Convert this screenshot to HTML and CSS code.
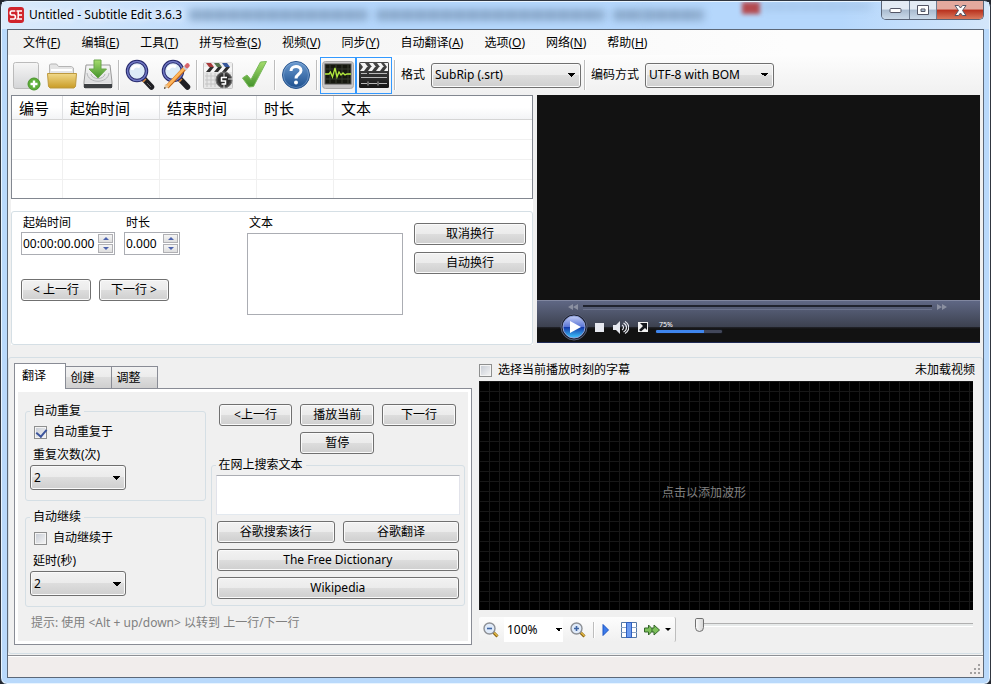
FILE: index.html
```
<!DOCTYPE html>
<html lang="zh-CN">
<head>
  <meta charset="UTF-8">
  <meta name="viewport" content="width=device-width, initial-scale=1.0">
  <title>Untitled - Subtitle Edit 3.6.3</title>
  <link rel="stylesheet" href="styles.css">
</head>
<body>
<div class="window">

  <!-- Title bar -->
  <header class="titlebar">
    <div class="glass" aria-hidden="true">
      <i class="smudge s1"></i><i class="smudge s2"></i><i class="smudge s3"></i><i class="smudge s4"></i><i class="smudge red"></i><i class="smudge s5"></i>
    </div>
    <svg class="app-icon" width="16" height="16" viewBox="0 0 16 16">
      <rect width="16" height="16" rx="3" fill="#d0242c"/>
      <path d="M7.300 4H3.200L2.300 5v2l1 1h3l1 1v2l-1 1H2" fill="none" stroke="#fff" stroke-width="1.700"/>
      <path d="M8.500 4H14M9.500 8H14M8.500 12H14M10.200 4v8" fill="none" stroke="#fff" stroke-width="1.500"/>
    </svg>
    <h1>Untitled - Subtitle Edit 3.6.3</h1>
    <div class="caption-buttons">
      <button class="min" aria-label="最小化"><svg width="13" height="7"><rect x="1" y="1.500" width="11" height="4" rx="1" fill="#fff" stroke="#535666"/></svg></button>
      <button class="max" aria-label="最大化"><svg width="12" height="10"><path d="M.5.500h11v9H.5zM4 4v2.500h4V4z" fill="#fff" fill-rule="evenodd" stroke="#535666"/></svg></button>
      <button class="close" aria-label="关闭"><svg width="13" height="11" viewBox="0 0 13 11"><path d="M1 .5h3.500l2 2.500 2-2.500H12L8.500 5.500l3.500 5H8.500l-2-2.500-2 2.500H1l3.500-5z" fill="#fff" stroke="#535666"/></svg></button>
    </div>
  </header>

  <div class="client">
    <nav class="menu">
      <a href="#">文件(<u>F</u>)</a>
      <a href="#">编辑(<u>E</u>)</a>
      <a href="#">工具(<u>T</u>)</a>
      <a href="#">拼写检查(<u>S</u>)</a>
      <a href="#">视频(<u>V</u>)</a>
      <a href="#">同步(<u>Y</u>)</a>
      <a href="#">自动翻译(<u>A</u>)</a>
      <a href="#">选项(<u>O</u>)</a>
      <a href="#">网络(<u>N</u>)</a>
      <a href="#">帮助(<u>H</u>)</a>
    </nav>

    <!-- Gradients shared by the toolbar icons -->
    <svg class="defs" width="0" height="0" aria-hidden="true">
      <defs>
        <linearGradient id="paper" x1="0" y1="0" x2="0" y2="1"><stop offset="0" stop-color="#f6f6f6"/><stop offset="1" stop-color="#d4d5d7"/></linearGradient>
        <linearGradient id="green" x1="0" y1="0" x2="0" y2="1"><stop offset="0" stop-color="#a5dc6c"/><stop offset="1" stop-color="#43922c"/></linearGradient>
        <linearGradient id="gold" x1="0" y1="0" x2="0" y2="1"><stop offset="0" stop-color="#f1d98a"/><stop offset="1" stop-color="#c99c26"/></linearGradient>
        <linearGradient id="drive" x1="0" y1="0" x2="0" y2="1"><stop offset="0" stop-color="#f4f4f4"/><stop offset="1" stop-color="#a9acb0"/></linearGradient>
        <linearGradient id="blue" x1="0" y1="0" x2="0" y2="1"><stop offset="0" stop-color="#6c9bd0"/><stop offset="1" stop-color="#1c4f8e"/></linearGradient>
        <linearGradient id="black" x1="0" y1="0" x2="0" y2="1"><stop offset="0" stop-color="#4a4a4a"/><stop offset="1" stop-color="#161616"/></linearGradient>
        <linearGradient id="orb" x1="0" y1="0" x2="0" y2="1"><stop offset="0" stop-color="#c3cdf5"/><stop offset=".48" stop-color="#5b76d6"/><stop offset=".5" stop-color="#1233a5"/><stop offset="1" stop-color="#3fc8ff"/></linearGradient>
      </defs>
    </svg>

    <div class="toolbar">
      <button class="tool" aria-label="新建">
        <svg width="32" height="32" viewBox="0 0 32 32">
          <rect x="3.500" y="3.500" width="25" height="26" rx="2" fill="url(#paper)" stroke="#bbb"/>
          <circle cx="24" cy="25" r="6" fill="#5cae37" stroke="#4a932c"/>
          <path d="M24 21.500v7M20.500 25h7" stroke="#fff" stroke-width="2.400"/>
        </svg>
      </button>
      <button class="tool" aria-label="打开">
        <svg width="32" height="32" viewBox="0 0 32 32">
          <path d="M3.500 16V6l1-1h6l2 2.500h13l2 1.500v8z" fill="#e4e4e4" stroke="#b5b5b5"/>
          <path d="M5 11h21" stroke="#fff" stroke-width="2"/>
          <path d="M1.500 14.500h29l-1 13-1.500 1.500H4l-1.500-1.500z" fill="url(#gold)" stroke="#bd993e"/>
        </svg>
      </button>
      <button class="tool" aria-label="保存">
        <svg width="32" height="32" viewBox="0 0 32 32">
          <path d="M4 6h24l2 17v5l-1 1H3l-1-1v-5z" fill="url(#paper)" stroke="#999"/>
          <path d="M2 25h28v4H2z" fill="#3d4043"/><path d="M3 24.500h26" stroke="#e8e8e8"/>
          <path d="M5 14c1 11 21 11 22 0M9 15c1 6 13 6 14 0" fill="none" stroke="#b4b6b9" stroke-width="1"/>
          <path d="M12 1h7v9h5.500L16 19 7 10h5z" fill="url(#green)" stroke="#6aa64a"/>
        </svg>
      </button>
      <span class="sep"></span>
      <button class="tool" aria-label="查找">
        <svg width="32" height="32" viewBox="0 0 32 32">
          <path d="M20 20l7.500 8" stroke="#1f1f24" stroke-width="5.500" stroke-linecap="round"/><path d="M19 20l2 2" stroke="#d68b3f" stroke-width="4"/><path d="M23 24l4 4" stroke="#666" stroke-width="1"/>
          <circle cx="13" cy="12" r="9.500" fill="#dcebf7" stroke="#25286b" stroke-width="3.500"/>
          <circle cx="13" cy="12" r="9.500" fill="none" stroke="#7079c4" stroke-width="1.500"/>
          <path d="M8 11c1-4 5-5 8-3" fill="none" stroke="#fff" stroke-width="3"/>
        </svg>
      </button>
      <button class="tool" aria-label="替换">
        <svg width="32" height="32" viewBox="0 0 32 32">
          <path d="M20 20l7.500 8" stroke="#1f1f24" stroke-width="5.500" stroke-linecap="round"/><path d="M19 20l2 2" stroke="#d68b3f" stroke-width="4"/>
          <circle cx="13" cy="12" r="9.500" fill="#dcebf7" stroke="#25286b" stroke-width="3.500"/>
          <circle cx="13" cy="12" r="9.500" fill="none" stroke="#7079c4" stroke-width="1.500"/>
          <path d="M8 11c1-4 5-5 8-3" fill="none" stroke="#fff" stroke-width="3"/>
          <path d="M7 28L26 8" stroke="#c06414" stroke-width="4"/><path d="M7 27.500L25.500 8" stroke="#ffb65c" stroke-width="2.800"/>
          <path d="M4 30l1-5 4 3z" fill="#e7c9a0"/><path d="M4 30l.5-2 1.500 1z" fill="#222"/>
          <path d="M24.500 10l2-2" stroke="#c9d0dd" stroke-width="4.500"/><path d="M27 7l.5-.5" stroke="#d9656b" stroke-width="4.500" stroke-linecap="round"/>
        </svg>
      </button>
      <span class="sep"></span>
      <button class="tool" aria-label="视觉同步">
        <svg width="32" height="32" viewBox="0 0 32 32">
          <rect x="1.500" y="4" width="29" height="25.500" rx="1" fill="#e6e6e6" stroke="#c4c4c4"/>
          <path d="M2 4h28v4H2z" fill="#eee"/><path d="M4 4h5l3 4H7z" fill="#a83b3b"/><path d="M12 4h5l3 4h-5z" fill="#56744d"/><path d="M20 4h5l3 4h-5z" fill="#36579a"/>
          <path d="M2 8h28v5H2z" fill="#f6f6f6"/><path d="M8 8h4l-4 5H4zM16 8h4l-4 5h-4zM24 8h4l-4 5h-4z" fill="#2d2d2d"/>
          <path d="M3 17h12M3 21h12M3 25h12M5 14v14M9 14v14M13 14v14" stroke="#c4c4c4"/>
          <circle cx="22" cy="21" r="8" fill="#444" stroke="#777"/><circle cx="22" cy="21" r="6" fill="#2c2c2c"/>
          <path d="M22 14v5M26 20h5M22 24v6" stroke="#ddd"/><path d="M19.500 18v4h4v3h-4M19 18.500h6" fill="none" stroke="#fff" stroke-width="1.500"/>
        </svg>
      </button>
      <button class="tool" aria-label="拼写检查">
        <svg width="32" height="32" viewBox="0 0 32 32">
          <path d="M4.500 19l4.500-3 4 4.500L22.500 3l6-.5-13 25-4.500.5z" fill="url(#green)" stroke="#79b95b"/>
        </svg>
      </button>
      <span class="sep"></span>
      <button class="tool" aria-label="帮助">
        <svg width="32" height="32" viewBox="0 0 32 32">
          <circle cx="16" cy="16" r="13.500" fill="url(#blue)" stroke="#28558e"/><circle cx="16" cy="16" r="12.500" fill="none" stroke="#8fb2dc" stroke-opacity=".5"/>
          <path d="M11 12c0-6 10-6 10-.5 0 4-5 3.500-5 8" fill="none" stroke="#fff" stroke-width="3"/><circle cx="16" cy="23.500" r="2" fill="#fff"/>
        </svg>
      </button>
      <span class="sep"></span>
      <button class="tool on" aria-label="显示波形">
        <svg width="32" height="32" viewBox="0 0 32 32">
          <rect x=".5" y="2.500" width="31" height="27" rx="3" fill="#c7c7c7" stroke="#aaa"/><rect x="3" y="5" width="26" height="20" fill="#15180f" stroke="#555"/>
          <path d="M3 10h26M3 15h26M3 20h26M8 5v20M14 5v20M20 5v20M26 5v20" stroke="#363b2e"/>
          <path d="M3 15h4l1.500-2 2 5 2.500-9 2 9 2-5 2 3 2-2 2 2 2-1h4" fill="none" stroke="#b2ea3c" stroke-width="1.300"/>
        </svg>
      </button>
      <button class="tool on" aria-label="显示视频">
        <svg width="32" height="32" viewBox="0 0 32 32">
          <rect x="1" y="3" width="30" height="26" rx="1.500" fill="url(#black)"/>
          <path d="M2 4h5l3 4H5zM11 4h4l3 4h-4zM19 4h4l3 4h-4zM26 4h4v4h-1zM5 8h4l-3 4H2zM13 8h4l-3 4h-4zM21 8h4l-3 4h-4zM29 8h1v4h-4z" fill="#f4f4f4"/>
          <path d="M3 14.500h6M11 14.500h18M3 18.500h26M3 24.500h6M11 24.500h8M21 24.500h8M10 22.500v4M20 22.500v4" stroke="#b8b8b8"/>
        </svg>
      </button>
      <span class="sep"></span>
      <label for="format">格式</label>
      <select id="format" class="combo format"><option>SubRip (.srt)</option></select>
      <span class="sep"></span>
      <label for="encoding">编码方式</label>
      <select id="encoding" class="combo encoding"><option>UTF-8 with BOM</option></select>
    </div>

    <main>
      <section class="upper">
        <div class="editor">
          <div class="list">
            <table>
              <colgroup><col class="c-no"><col class="c-time"><col class="c-time"><col class="c-dur"><col></colgroup>
              <thead><tr><th>编号</th><th>起始时间</th><th>结束时间</th><th>时长</th><th>文本</th></tr></thead>
              <tbody>
                <tr><td></td><td></td><td></td><td></td><td></td></tr>
                <tr><td></td><td></td><td></td><td></td><td></td></tr>
                <tr><td></td><td></td><td></td><td></td><td></td></tr>
                <tr><td></td><td></td><td></td><td></td><td></td></tr>
              </tbody>
            </table>
          </div>

          <div class="edit-box">
            <div class="timing">
              <div class="times">
                <div class="field">
                  <label for="start">起始时间</label>
                  <div class="spin start"><input id="start" type="text" value="00:00:00.000"><span class="arrows"><button aria-label="增加"></button><button aria-label="减少"></button></span></div>
                </div>
                <div class="field">
                  <label for="duration">时长</label>
                  <div class="spin duration"><input id="duration" type="text" value="0.000"><span class="arrows"><button aria-label="增加"></button><button aria-label="减少"></button></span></div>
                </div>
              </div>
              <div class="pair">
                <button class="btn">&lt; 上一行</button>
                <button class="btn">下一行 &gt;</button>
              </div>
            </div>
            <div class="field text-field">
              <label for="text">文本</label>
              <textarea id="text"></textarea>
            </div>
            <div class="wraps">
              <button class="btn">取消换行</button>
              <button class="btn">自动换行</button>
            </div>
          </div>
        </div>

        <div class="video">
          <div class="player">
            <div class="seek">
              <svg width="10" height="6"><path d="M5 0v6L0 3zM10 0v6L5 3z" fill="#8b90a1"/></svg>
              <input type="range" class="seek-bar" value="0" aria-label="位置">
              <svg width="10" height="6"><path d="M0 0v6l5-3zM5 0v6l5-3z" fill="#8b90a1"/></svg>
            </div>
            <div class="controls">
              <button aria-label="播放"><svg width="28" height="28" viewBox="0 0 28 28"><circle cx="14" cy="14" r="13" fill="#1c2030" stroke="#596078"/><circle cx="14" cy="14" r="11" fill="url(#orb)" stroke="#93a4dc"/><path d="M10 8l11 6-11 6z" fill="#fff"/></svg></button>
              <button aria-label="停止"><svg width="9" height="9"><rect width="9" height="9" fill="#e6e8ef"/></svg></button>
              <button aria-label="静音"><svg width="16" height="13" viewBox="0 0 16 13"><path d="M0 4h3l4-4v13L3 9H0z" fill="#e6e8ef"/><path d="M9 4c2 1 2 4 0 5M10.500 2c4 2 4 7 0 9M12 .5c5 3 5 9 0 12" fill="none" stroke="#e6e8ef" stroke-width="1.200"/></svg></button>
              <button aria-label="全屏"><svg width="10" height="10"><rect width="10" height="10" fill="#f1f1f1"/><path d="M2 1h7v7L7 6 3 9.500 1 8l4-4z" fill="#15171c"/></svg></button>
              <label class="volume"><span>75%</span><input type="range" value="75" aria-label="音量"></label>
            </div>
          </div>
        </div>
      </section>

      <section class="lower">
        <div class="tabs">
          <div class="tab-row" role="tablist">
            <button role="tab" aria-selected="true">翻译</button>
            <button role="tab">创建</button>
            <button role="tab">调整</button>
          </div>
          <div class="tab-page">
            <div class="options">
              <fieldset>
                <legend>自动重复</legend>
                <label class="check"><input type="checkbox" checked>自动重复于</label>
                <label class="caption" for="repeat">重复次数(次)</label>
                <select id="repeat" class="combo small"><option>2</option></select>
              </fieldset>
              <fieldset>
                <legend>自动继续</legend>
                <label class="check"><input type="checkbox">自动继续于</label>
                <label class="caption" for="delay">延时(秒)</label>
                <select id="delay" class="combo small"><option>2</option></select>
              </fieldset>
            </div>
            <div class="actions">
              <div class="play-grid">
                <button class="btn">&lt;上一行</button>
                <button class="btn">播放当前</button>
                <button class="btn">下一行</button>
                <button class="btn pause">暂停</button>
              </div>
              <fieldset class="search">
                <legend>在网上搜索文本</legend>
                <textarea aria-label="在网上搜索文本"></textarea>
                <div class="search-grid">
                  <button class="btn">谷歌搜索该行</button>
                  <button class="btn">谷歌翻译</button>
                  <button class="btn wide">The Free Dictionary</button>
                  <button class="btn wide">Wikipedia</button>
                </div>
              </fieldset>
            </div>
            <p class="hint">提示: 使用 &lt;Alt + up/down&gt; 以转到 上一行/下一行</p>
          </div>
        </div>

        <div class="wave">
          <div class="wave-head">
            <label class="check"><input type="checkbox">选择当前播放时刻的字幕</label>
            <span>未加载视频</span>
          </div>
          <div class="wave-view">点击以添加波形</div>
          <div class="wave-foot">
            <div class="wave-tools">
              <button aria-label="缩小"><svg width="16" height="16" viewBox="0 0 16 16"><path d="M10 10l4.500 4.500" stroke="#8a6410" stroke-width="3"/><path d="M11 10.500l3.500 3.500" stroke="#e8bd49" stroke-width="1.300"/><circle cx="6.500" cy="6.500" r="5.500" fill="#dfeaf9" stroke="#8d9095" stroke-width="1.400"/><path d="M4 6.500h5" stroke="#3f65a5" stroke-width="1.600"/></svg></button>
              <select class="zoom" aria-label="缩放"><option>100%</option></select>
              <button aria-label="放大"><svg width="16" height="16" viewBox="0 0 16 16"><path d="M10 10l4.500 4.500" stroke="#8a6410" stroke-width="3"/><path d="M11 10.500l3.500 3.500" stroke="#e8bd49" stroke-width="1.300"/><circle cx="6.500" cy="6.500" r="5.500" fill="#dfeaf9" stroke="#8d9095" stroke-width="1.400"/><path d="M4 6.500h5M6.500 4v5" stroke="#3f65a5" stroke-width="1.600"/></svg></button>
              <span class="sep"></span>
              <button aria-label="播放"><svg width="16" height="16"><path d="M5 2.500v11L10.500 8z" fill="#3b7bea" stroke="#1c55c4"/></svg></button>
              <button aria-label="居中"><svg width="16" height="16"><path d="M.5.500h15v15H.5z" fill="#fff" stroke="#5377a5"/><path d="M0 5.500h16M0 10.500h16" stroke="#8ba5c6"/><path d="M5.500.500h5v15h-5z" fill="#6d9cf0" stroke="#2f5fbe"/></svg></button>
              <button class="speed" aria-label="速度"><svg width="16" height="12"><path d="M.5 4h4V1l5 5-5 5V8h-4z" fill="#7cc05a" stroke="#35662a"/><path d="M8 4h2V1l5.500 5L10 11V8H8z" fill="#7cc05a" stroke="#35662a"/></svg><i></i></button>
            </div>
            <input type="range" class="position" value="0" aria-label="位置">
          </div>
        </div>
      </section>
    </main>

    <footer class="status">
      <svg width="10" height="10"><path d="M8 0h2v2H8zM4 4h2v2H4zM8 4h2v2H8zM0 8h2v2H0zM4 8h2v2H4zM8 8h2v2H8z" fill="#a3a0a0"/></svg>
    </footer>
  </div>
</div>
</body>
</html>
```
FILE: styles.css
```
* {
  box-sizing: border-box;
}

body {
  margin: 0;
  background: #23272f;
  color: #000;
  font-family: "Noto Sans", "Noto Sans CJK SC", sans-serif;
  font-size: 12px;
  line-height: 16px;
}

button, input, select, textarea {
  font: inherit;
  color: inherit;
  margin: 0;
}

button {
  padding: 0;
  border: none;
  background: none;
}

svg {
  display: block;
  flex: none;
}

.window {
  display: flex;
  flex-direction: column;
  min-height: 100vh;
  padding: 0 6px 6px;
  border: 1px solid #303640;
  border-radius: 7px;
  background: #b9d9fb;
  box-shadow: inset 0 0 0 1px #e8f4ff;
}

/* Title bar */
.titlebar {
  position: relative;
  display: flex;
  align-items: center;
  gap: 5px;
  height: 28px;
}

.app-icon {
  margin-left: 1px;
}

.app-icon, h1, .caption-buttons {
  position: relative;
}

h1 {
  flex: 1;
  margin: 0;
  font-size: 12px;
  font-weight: normal;
  text-shadow: 0 0 6px #fff, 0 0 8px #fff;
}

.glass {
  position: absolute;
  inset: 1px -5px 0;
  overflow: hidden;
  background: linear-gradient(90deg, #dcebfb, #b5d7fc 28%, #b5d7fc 85%, #d3e6fa);
}

.smudge {
  position: absolute;
  top: 8px;
  height: 10px;
  background: repeating-linear-gradient(90deg, #7d9bbd 0 9px, #98b6d6 9px 13px);
  filter: blur(4px);
}

.s1 { left: 19%; width: 18%; }
.s2 { left: 38%; width: 23%; }
.s3 { left: 62%; width: 3%; }
.s4 { left: 65%; width: 6%; }
.s5 { left: 77%; width: 11%; top: 2px; height: 5px; opacity: .5; }

.red {
  left: 75%;
  top: 0;
  width: 18px;
  height: 12px;
  background: #b44a4f;
  filter: blur(2px);
}

.caption-buttons {
  display: flex;
  align-self: flex-start;
  height: 19px;
  border: 1px solid #596477;
  border-top: none;
  border-radius: 0 0 5px 5px;
  overflow: hidden;
}

.caption-buttons button {
  display: flex;
  align-items: center;
  justify-content: center;
  width: 28px;
  border-right: 1px solid #6d7d92;
  background: linear-gradient(#e3ebf4 45%, #a9bbcf 50%, #cbdaea);
}

.caption-buttons .max {
  width: 27px;
}

.caption-buttons .close {
  width: 46px;
  border: none;
  background: linear-gradient(#e3a99e 45%, #b8301d 50%, #d9795d);
}

.client {
  display: flex;
  flex: 1;
  flex-direction: column;
  border: 1px solid #5c6878;
  background: #f0f0f0;
}

/* Menu and toolbar */
.menu {
  display: flex;
  align-items: center;
  gap: 21px;
  height: 25px;
  padding-left: 15px;
  background: linear-gradient(90deg, #f0f0f0, #fdfdfd 80%);
}

.menu a {
  color: inherit;
  text-decoration: none;
  white-space: nowrap;
}

.defs {
  position: absolute;
}

.toolbar {
  display: flex;
  align-items: center;
  height: 40px;
  background: linear-gradient(#fdfdfd, #f0f0f0);
}

.tool {
  display: flex;
  align-items: center;
  justify-content: center;
  width: 36px;
  height: 37px;
}

.tool.on {
  border: 1px solid #3399ff;
}

.sep {
  width: 2px;
  height: 30px;
  margin: 0 2px;
  border-left: 1px solid #bdbdbd;
  border-right: 1px solid #fff;
}

.toolbar label {
  margin: 0 6px 0 3px;
}

.combo {
  height: 25px;
  padding: 0 18px 0 3px;
  border: 1px solid #707070;
  border-radius: 3px;
  appearance: none;
  background:
    linear-gradient(to top right, transparent 50%, #000 50%) right 8px center / 4px 4px no-repeat,
    linear-gradient(to top left, transparent 50%, #000 50%) right 4px center / 4px 4px no-repeat,
    linear-gradient(#f2f2f2, #ebebeb 50%, #dddddd 50%, #cfcfcf);
  box-shadow: inset 0 0 0 1px #fafafa;
}

.format {
  width: 150px;
  margin-right: 1px;
}

.encoding {
  width: 129px;
}

/* Buttons and boxes */
.btn {
  height: 22px;
  border: 1px solid #707070;
  border-radius: 3px;
  background: linear-gradient(#f2f2f2, #ebebeb 50%, #dddddd 50%, #cfcfcf);
  box-shadow: inset 0 0 0 1px #fafafa;
  text-align: center;
  white-space: nowrap;
}

textarea {
  display: block;
  resize: none;
  border: 1px solid #abadb3;
  background: #fff;
}

main {
  display: flex;
  flex: 1;
  flex-direction: column;
  gap: 12px;
}

.upper {
  display: grid;
  flex: 1;
  grid-template-columns: 522fr 443fr;
  gap: 4px;
  padding: 0 3px;
}

.editor {
  display: flex;
  flex-direction: column;
  gap: 12px;
  background: #fff;
}

.list {
  flex: 1;
  border: 1px solid #828790;
}

table {
  width: 100%;
  border-spacing: 0;
  table-layout: fixed;
}

.c-no { width: 51px; }
.c-time { width: 97px; }
.c-dur { width: 77px; }

th {
  height: 24px;
  padding: 0 0 0 7px;
  border-right: 1px solid #dfe0e2;
  border-bottom: 1px solid #d5d5d5;
  background: linear-gradient(#fff 50%, #f3f4f6);
  font-size: 15px;
  font-weight: normal;
  line-height: 20px;
  text-align: left;
}

td {
  height: 20px;
  padding: 0;
  border-right: 1px solid #f0f0f0;
  border-bottom: 1px solid #f0f0f0;
}

th:last-child, td:last-child {
  border-right: none;
}

tbody tr:last-child td {
  height: 18px;
  border-bottom: none;
}

.edit-box {
  display: flex;
  height: 134px;
  padding: 3px 6px 0 9px;
  border: 1px solid #d5dfe5;
  border-radius: 3px;
}

.timing {
  flex: 1;
}

.times {
  display: flex;
  gap: 9px;
}

.field label {
  display: block;
  padding-left: 2px;
}

.spin {
  display: flex;
  height: 23px;
  margin-top: 1px;
  padding: 1px;
  border: 1px solid #abadb3;
}

.start { width: 94px; }
.duration { width: 56px; }

.spin input {
  flex: 1;
  min-width: 0;
  padding: 0;
  border: none;
  outline: none;
  background: none;
}

.arrows {
  display: flex;
  flex-direction: column;
  width: 15px;
  gap: 1px;
}

.arrows button {
  display: flex;
  flex: 1;
  align-items: center;
  justify-content: center;
  border: 1px solid #b0b0b4;
  background: linear-gradient(#f5f5f5, #dedede);
}

.arrows button::after {
  content: "";
  border: solid transparent;
  border-width: 0 3px 3px;
  border-bottom-color: #4d63ad;
}

.arrows button:last-child::after {
  border-width: 3px 3px 0;
  border-top-color: #4d63ad;
}

.pair {
  display: flex;
  gap: 8px;
  margin-top: 24px;
}

.pair .btn {
  width: 70px;
}

.text-field {
  width: 156px;
  margin-right: 11px;
}

.text-field textarea {
  width: 100%;
  height: 82px;
  margin-top: 2px;
}

.wraps {
  display: flex;
  flex-direction: column;
  gap: 7px;
  width: 112px;
  padding-top: 8px;
}

/* Video player */
.video {
  display: flex;
  flex-direction: column;
  justify-content: flex-end;
  margin-bottom: 2px;
  background: #121212;
}

.player {
  height: 43px;
  border-top: 1px solid #8187a0;
  border-bottom: 1px solid #202b55;
  background: linear-gradient(#5f6784, #3c414f 26px, #23252b 26px, #121212 28px);
}

.seek {
  display: flex;
  align-items: center;
  gap: 5px;
  height: 12px;
  padding: 0 33px 0 31px;
}

input[type="range"] {
  appearance: none;
  min-width: 0;
  margin: 0;
  background: none;
}

.seek-bar {
  flex: 1;
  height: 6px;
}

.seek-bar::-webkit-slider-runnable-track {
  height: 5px;
  border-top: 2px solid #20232e;
  border-bottom: 1px solid #6a718a;
}

.seek-bar::-webkit-slider-thumb, .volume input::-webkit-slider-thumb {
  appearance: none;
  width: 1px;
  height: 1px;
}

.controls {
  display: flex;
  align-items: center;
  height: 28px;
  padding-left: 23px;
}

.controls button {
  margin-right: 7px;
}

.controls button:nth-child(2), .controls button:nth-child(3) {
  margin-right: 9px;
}

.volume {
  width: 68px;
}

.volume span {
  display: block;
  padding-left: 4px;
  color: #fff;
  font-size: 7px;
  line-height: 8px;
}

.volume input {
  display: block;
  width: 100%;
  height: 5px;
}

.volume input::-webkit-slider-runnable-track {
  height: 5px;
  border: 1px solid #15171d;
  border-radius: 2px;
  background: linear-gradient(90deg, #3f86ee 73%, #42475a 73%);
}

/* Lower half */
.lower {
  display: grid;
  grid-template-columns: 458fr 494fr;
  gap: 7px;
  margin: 0 0 1px;
  padding: 5px 9px 8px 5px;
  border: 1px solid #d5dfe5;
  border-radius: 3px;
}

.tabs, .wave {
  display: flex;
  flex-direction: column;
}

.tab-row {
  display: flex;
  align-items: flex-end;
  height: 25px;
}

.tab-row button {
  position: relative;
  width: 46px;
  height: 22px;
  padding-right: 12px;
  border: 1px solid #898c95;
  border-left-width: 0;
  border-bottom: none;
  background: linear-gradient(#f2f2f2, #ebebeb 50%, #dddddd 50%, #cfcfcf);
}

.tab-row [aria-selected] {
  z-index: 1;
  width: 52px;
  height: 26px;
  margin-bottom: -1px;
  padding-bottom: 2px;
  border-left-width: 1px;
  background: #fff;
}

.tab-page {
  display: grid;
  flex: 1;
  grid-template-columns: 181fr 255fr;
  column-gap: 5px;
  padding: 14px 6px 0 10px;
  border: 1px solid #898c95;
  outline: 3px solid #fff;
  outline-offset: -4px;
}

.options {
  display: flex;
  flex-direction: column;
  gap: 8px;
}

fieldset {
  min-width: 0;
  margin: 0;
  padding: 5px 4px 10px;
  border: 1px solid #d5dfe5;
  border-radius: 3px;
}

legend {
  padding: 0 3px;
}

.check {
  display: flex;
  align-items: center;
  gap: 6px;
}

fieldset .check {
  padding-left: 4px;
}

.check input {
  display: grid;
  appearance: none;
  width: 13px;
  height: 13px;
  border: 1px solid #8e8f8f;
  outline: 1px solid #f4f4f4;
  outline-offset: -2px;
  background: linear-gradient(135deg, #c5cad3, #f6f6f6);
}

.check input:checked::after {
  content: "";
  width: 5px;
  height: 8px;
  margin-left: 3px;
  border: solid #3c549c;
  border-width: 0 2px 2px 0;
  transform: rotate(40deg);
}

.caption {
  display: block;
  margin: 7px 0 2px 3px;
}

.small {
  display: block;
  width: 96px;
}

.actions {
  display: flex;
  flex-direction: column;
  gap: 3px;
  padding-top: 1px;
}

.play-grid {
  display: grid;
  grid-template-columns: repeat(3, 1fr);
  gap: 6px 8px;
  padding: 0 9px 0 8px;
}

.pause {
  grid-column: 2;
}

.search {
  padding: 2px 4px 6px;
}

.search textarea {
  width: 100%;
  height: 40px;
  border-color: #abadb3 #e2e3ea #e3e9ef;
}

.search-grid {
  display: grid;
  grid-template-columns: 118fr 116fr;
  gap: 6px 8px;
  margin: 6px 1px 0;
}

.wide {
  grid-column: span 2;
}

.hint {
  grid-column: span 2;
  margin: 0 0 13px 6px;
  padding-top: 8px;
  color: #808080;
}

/* Waveform */
.wave-head {
  display: flex;
  justify-content: space-between;
  height: 18px;
  margin-right: -2px;
  line-height: 14px;
}

.wave-head .check {
  height: 14px;
}

.wave-view {
  display: flex;
  align-items: center;
  justify-content: center;
  height: 229px;
  padding: 0 44px 6px 0;
  background:
    repeating-linear-gradient(90deg, #171717 0 1px, transparent 1px 10px),
    repeating-linear-gradient(#171717 0 1px, transparent 1px 10px),
    #000;
  color: #808080;
}

.wave-foot {
  display: flex;
  gap: 19px;
  margin-top: 7px;
}

.wave-tools {
  display: flex;
  align-items: center;
  width: 197px;
  height: 25px;
  padding-left: 4px;
  border-right: 1px solid #bdbdbd;
  border-radius: 2px;
  background: linear-gradient(#fdfdfd, #f0f0f0);
}

.wave-tools .sep {
  height: 16px;
  margin: 0 3px 0 7px;
}

.wave-tools button {
  margin-right: 7px;
}

.wave-tools button[aria-label="放大"] {
  margin: 0;
}

.zoom {
  width: 59px;
  height: 25px;
  margin: 0 7px 0 -2px;
  padding: 0 3px;
  border: none;
  appearance: none;
  background:
    linear-gradient(to top right, transparent 50%, #000 50%) right 4px center / 3px 3px no-repeat,
    linear-gradient(to top left, transparent 50%, #000 50%) right 1px center / 3px 3px no-repeat,
    #fff;
}

.wave-tools .speed {
  display: flex;
  align-items: center;
  gap: 5px;
  margin: 0;
}

.speed i {
  border: 3px solid transparent;
  border-top-color: #000;
  border-bottom: none;
}

.position {
  flex: 1;
  height: 16px;
}

.position::-webkit-slider-runnable-track {
  height: 4px;
  border-top: 1px solid #b0b0b0;
  border-bottom: 1px solid #fff;
  background: #e7eaea;
}

.position::-webkit-slider-thumb {
  appearance: none;
  width: 9px;
  height: 14px;
  margin-top: -6px;
  border: 1px solid #707070;
  border-radius: 2px 2px 5px 5px;
  background: linear-gradient(90deg, #fafafa, #d6d6d6);
}

/* Status bar */
.status {
  display: flex;
  align-items: flex-end;
  justify-content: flex-end;
  height: 22px;
  padding: 0 3px 3px 0;
  border-top: 1px solid #8d8f94;
  box-shadow: inset 0 1px 0 #fff;
  background: #f1edec;
}
```
